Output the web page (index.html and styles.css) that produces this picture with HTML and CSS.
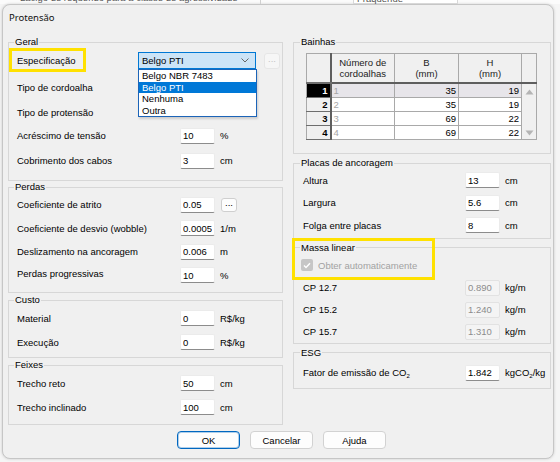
FILE: index.html
```html
<!DOCTYPE html>
<html lang="pt-BR">
<head>
  <meta charset="UTF-8" />
  <meta name="viewport" content="width=device-width, initial-scale=1.0"/>
  <title>Protensão</title>
  <link rel="stylesheet" href="styles.css">
</head>
<body>
  <!-- janela principal, quase toda coberta pelo diálogo -->
  <div class="behind">
    <span class="behind-text">Lacigo de requerido para a classe de agressividade</span>
    <span class="behind-field">Fraquenue</span>
  </div>

  <div class="dialog">
    <div class="dialog-title">Protensão</div>

    <div class="dialog-body">
      <!-- coluna da esquerda -->
      <div class="column column-left">
        <fieldset class="group group-geral">
          <legend>Geral</legend>
          <div class="row">
            <label class="label-spec">Especificação</label>
            <div class="combo">
              <span>Belgo PTI</span>
              <svg class="chevron" width="8" height="5" viewBox="0 0 8 5"><polyline points="0.5,0.5 4,4 7.5,0.5" fill="none" stroke="#666" stroke-width="1"/></svg>
              <ul class="combo-list">
                <li>Belgo NBR 7483</li>
                <li class="selected">Belgo PTI</li>
                <li>Nenhuma</li>
                <li>Outra</li>
              </ul>
            </div>
            <button class="dots dots-off" type="button">...</button>
          </div>
          <div class="row"><label class="label-low">Tipo de cordoalha</label></div>
          <div class="row"><label class="label-low">Tipo de protensão</label></div>
          <div class="row"><label>Acréscimo de tensão</label><input type="text" value="10"><span class="unit">%</span></div>
          <div class="row"><label>Cobrimento dos cabos</label><input type="text" value="3"><span class="unit">cm</span></div>
        </fieldset>

        <fieldset class="group group-perdas">
          <legend>Perdas</legend>
          <div class="row"><label>Coeficiente de atrito</label><input type="text" value="0.05"><button class="dots" type="button">...</button></div>
          <div class="row"><label>Coeficiente de desvio (wobble)</label><input type="text" value="0.0005"><span class="unit">1/m</span></div>
          <div class="row"><label>Deslizamento na ancoragem</label><input type="text" value="0.006"><span class="unit">m</span></div>
          <div class="row"><label class="label-high">Perdas progressivas</label><input type="text" value="10"><span class="unit">%</span></div>
        </fieldset>

        <fieldset class="group group-custo">
          <legend>Custo</legend>
          <div class="row"><label>Material</label><input type="text" value="0"><span class="unit">R$/kg</span></div>
          <div class="row"><label>Execução</label><input type="text" value="0"><span class="unit">R$/kg</span></div>
        </fieldset>

        <fieldset class="group group-feixes">
          <legend>Feixes</legend>
          <div class="row"><label>Trecho reto</label><input type="text" value="50"><span class="unit">cm</span></div>
          <div class="row"><label>Trecho inclinado</label><input type="text" value="100"><span class="unit">cm</span></div>
        </fieldset>
      </div>

      <!-- coluna da direita -->
      <div class="column column-right">
        <fieldset class="group group-bainhas">
          <legend>Bainhas</legend>
          <table class="grid">
            <colgroup>
              <col class="col-rh">
              <col class="col-n">
              <col class="col-b">
              <col class="col-h">
              <col class="col-sb">
            </colgroup>
            <thead>
              <tr>
                <th class="rh"></th>
                <th>Número de<br>cordoalhas</th>
                <th>B<br>(mm)</th>
                <th>H<br>(mm)</th>
                <th class="sb"></th>
              </tr>
            </thead>
            <tbody>
              <tr class="current">
                <td class="rh">1</td><td class="n">1</td><td>35</td><td>19</td>
                <td class="sb" rowspan="4">
                  <div class="scroll">
                    <svg width="9" height="6" viewBox="0 0 9 6"><polygon points="4.5,0.5 8.5,5.5 0.5,5.5" fill="#b4b4b4"/></svg>
                    <svg width="9" height="6" viewBox="0 0 9 6"><polygon points="0.5,0.5 8.5,0.5 4.5,5.5" fill="#b4b4b4"/></svg>
                  </div>
                </td>
              </tr>
              <tr><td class="rh">2</td><td class="n">2</td><td>35</td><td>19</td></tr>
              <tr><td class="rh">3</td><td class="n">3</td><td>69</td><td>22</td></tr>
              <tr><td class="rh">4</td><td class="n">4</td><td>69</td><td>22</td></tr>
            </tbody>
          </table>
        </fieldset>

        <fieldset class="group group-placas">
          <legend>Placas de ancoragem</legend>
          <div class="row"><label>Altura</label><input type="text" value="13"><span class="unit">cm</span></div>
          <div class="row"><label>Largura</label><input type="text" value="5.6"><span class="unit">cm</span></div>
          <div class="row"><label>Folga entre placas</label><input type="text" value="8"><span class="unit">cm</span></div>
        </fieldset>

        <fieldset class="group group-massa">
          <legend>Massa linear</legend>
          <div class="row row-check">
            <span class="check">
              <svg width="8" height="7" viewBox="0 0 8 7"><polyline points="1,3.5 3,5.5 7,1.2" fill="none" stroke="#fff" stroke-width="1.4"/></svg>
            </span>
            <span class="check-text">Obter automaticamente</span>
          </div>
          <div class="row"><label>CP 12.7</label><input type="text" value="0.890" disabled><span class="unit">kg/m</span></div>
          <div class="row"><label>CP 15.2</label><input type="text" value="1.240" disabled><span class="unit">kg/m</span></div>
          <div class="row"><label>CP 15.7</label><input type="text" value="1.310" disabled><span class="unit">kg/m</span></div>
        </fieldset>

        <fieldset class="group group-esg">
          <legend>ESG</legend>
          <div class="row"><label>Fator de emissão de CO<sub>2</sub></label><input type="text" value="1.842"><span class="unit">kgCO<sub>2</sub>/kg</span></div>
        </fieldset>
      </div>
    </div>

    <div class="dialog-buttons">
      <button class="btn btn-default" type="button">OK</button>
      <button class="btn" type="button">Cancelar</button>
      <button class="btn" type="button">Ajuda</button>
    </div>
  </div>
</body>
</html>
```

FILE: styles.css
```css
body {
  margin: 0;
  width: 560px;
  height: 462px;
  overflow: hidden;
  background: #f5f5f5;
  font-family: "Liberation Sans", Arial, sans-serif;
  font-size: 9.5px;
  color: #000;
}

/* faixa da janela de trás */
.behind {
  height: 4px;
  overflow: hidden;
  display: flex;
  background: #fbfbfb;
  color: #555;
}

.behind-text {
  margin: -8px 0 0 20px;
  width: 240px;
  border-right: 1px solid #d0d0d0;
  line-height: 12px;
}

.behind-field {
  margin: -8px 0 0 92px;
  width: 100px;
  padding-left: 3px;
  line-height: 12px;
  background: #fff;
  border: 1px solid #d8d8d8;
}

.dialog {
  margin-left: 2px;
  width: 552px;
  height: 455px;
  box-sizing: border-box;
  background: #f0f0f0;
  border: 1px solid #c6c6c6;
  border-radius: 8px;
  box-shadow: 0 0 3px rgba(0,0,0,0.18);
  display: flex;
  flex-direction: column;
}

.dialog-title {
  height: 31px;
  line-height: 25px;
  padding-left: 6px;
  font-family: "Noto Sans", "Liberation Sans", sans-serif;
  font-size: 9.5px;
  color: #111;
}

.dialog-body {
  display: flex;
  align-items: flex-start;
  gap: 10px;
  padding-left: 5px;
}

.column {
  display: flex;
  flex-direction: column;
}

.column-left {
  width: 275px;
  gap: 0;
}

.column-right {
  width: 258px;
  gap: 3px;
}

/* caixas de grupo */
.group {
  position: relative;
  margin: 0;
  padding: 0 0 0 8px;
  border: 1px solid #d7d7d7;
  min-width: 0;
}

.group legend {
  margin-left: -3px;
  padding: 0 1px;
  line-height: 12px;
}

.column-right .group {
  padding-left: 9px;
}

.row {
  display: flex;
  align-items: center;
  height: 25px;
}

.row label {
  width: 163px;
  flex: none;
}

.column-right .row label {
  width: 162px;
}

.label-low {
  padding-top: 4px;
}

.label-high {
  padding-bottom: 3px;
}

input {
  width: 35px;
  height: 16px;
  box-sizing: border-box;
  margin: 0;
  padding: 0 2px;
  font: inherit;
  color: #000;
  background: #fff;
  border: 1px solid #ebebeb;
  border-bottom-color: #8c8c8c;
  border-radius: 2px;
}

input:disabled {
  background: #f4f4f4;
  border-color: #e2e2e2;
  color: #8c8c8c;
}

.unit {
  margin-left: 5px;
}

sub {
  font-size: 6px;
  vertical-align: -2px;
  line-height: 0;
}

/* Geral */
.group-geral {
  padding-bottom: 7px;
}

.group-geral .label-spec {
  position: relative;
  width: 121px;
}

/* destaque amarelo */
.label-spec::after {
  content: "";
  position: absolute;
  left: -8px;
  top: -7px;
  width: 77px;
  height: 24px;
  box-sizing: border-box;
  border: 3px solid #ffe100;
}

.combo {
  position: relative;
  width: 118px;
  height: 17px;
  box-sizing: border-box;
  display: flex;
  align-items: center;
  justify-content: space-between;
  padding: 0 6px 0 3px;
  background: #cce4f7;
  border: 1px solid #0078d4;
}

.combo-list {
  position: absolute;
  left: -1px;
  top: 16px;
  width: 119px;
  box-sizing: border-box;
  margin: 0;
  padding: 0;
  list-style: none;
  background: #fff;
  border: 1px solid #1c64b8;
  box-shadow: 1px 2px 2px rgba(0,0,0,0.15);
  z-index: 2;
}

.combo-list li {
  height: 11.5px;
  line-height: 11.5px;
  padding-left: 3px;
}

.combo-list .selected {
  background: #0078d7;
  color: #fff;
}

.dots {
  height: 14px;
  margin-left: 6px;
  padding: 0 3px 3px;
  font: inherit;
  line-height: 8px;
  color: #000;
  background: #fdfdfd;
  border: 1px solid #cfcfcf;
  border-radius: 3px;
}

.dots-off {
  height: 16px;
  margin-left: 8px;
  color: #c4c4c4;
  background: #f6f6f6;
  border-color: #e6e6e6;
}

/* Perdas, Custo, Feixes */
.group-perdas {
  padding-bottom: 5px;
}

.group-perdas .row {
  height: 23.5px;
}

.group-custo {
  margin-top: 1px;
  padding-bottom: 3px;
}

.group-custo .row {
  height: 24px;
}

.group-feixes {
  margin-top: 1px;
  padding-bottom: 5px;
}

.group-feixes .row {
  height: 24px;
}

/* Bainhas */
.group-bainhas {
  padding-bottom: 13px;
}

.grid {
  margin: 5px 0 0 3px;
  width: 230px;
  table-layout: fixed;
  border-collapse: collapse;
  border: 1px solid #838383;
}

.col-rh { width: 24px; }
.col-n { width: 64px; }
.col-b { width: 64px; }
.col-h { width: 63px; }
.col-sb { width: 15px; }

.grid th,
.grid td {
  padding: 0 2px;
  border: 1px solid #a9a9a9;
  font-weight: normal;
}

.grid th {
  height: 28px;
  line-height: 11px;
  background: #f0f0f0;
  color: #222;
  text-align: center;
  border-bottom: 2px solid #5e5e5e;
}

.grid td {
  height: 13px;
  line-height: 13px;
  text-align: right;
  background: #fff;
}

.grid .rh {
  background: #f0f0f0;
  border-right: 2px solid #5e5e5e;
  border-bottom-color: #6e6e6e;
  font-weight: bold;
}

.grid td.n {
  text-align: left;
  color: #a6a6a6;
}

.grid .current td {
  background: #e7e5ea;
}

.grid .current td.rh {
  background: #000;
  color: #fff;
}

.grid td.sb {
  padding: 0;
  background: #f0f0f0;
  border-top: 0;
}

.scroll {
  height: 54px;
  display: flex;
  flex-direction: column;
  justify-content: space-between;
  align-items: center;
  padding: 4px 0 3px;
  box-sizing: border-box;
}

/* Placas de ancoragem */
.group-placas {
  padding-bottom: 1px;
}

.group-placas .row {
  height: 22.5px;
}

/* Massa linear */
.group-massa .row {
  height: 22px;
}

.group-massa .row-check {
  height: 23px;
}

.group-massa::after {
  content: "";
  position: absolute;
  left: -2px;
  top: -16px;
  width: 143px;
  height: 42px;
  box-sizing: border-box;
  border: 3px solid #ffe100;
}

.check {
  width: 12px;
  height: 12px;
  border-radius: 2px;
  background: #c6c6c6;
  display: flex;
  align-items: center;
  justify-content: center;
  margin-left: -2px;
}

.check-text {
  margin-left: 5px;
  color: #a2a2a2;
}

/* ESG */
.group-esg {
  padding-bottom: 1px;
}

.group-esg .row {
  height: 28px;
}

/* botões */
.dialog-buttons {
  display: flex;
  justify-content: center;
  gap: 10px;
  margin-top: 6px;
  padding-left: 7px;
}

.btn {
  width: 63px;
  height: 18px;
  padding: 0;
  font: inherit;
  color: #000;
  background: #fdfdfd;
  border: 1px solid #d2d2d2;
  border-radius: 4px;
}

.btn-default {
  border-color: #0067c0;
  box-shadow: inset 0 0 0 1px rgba(0,103,192,0.3);
}
```
